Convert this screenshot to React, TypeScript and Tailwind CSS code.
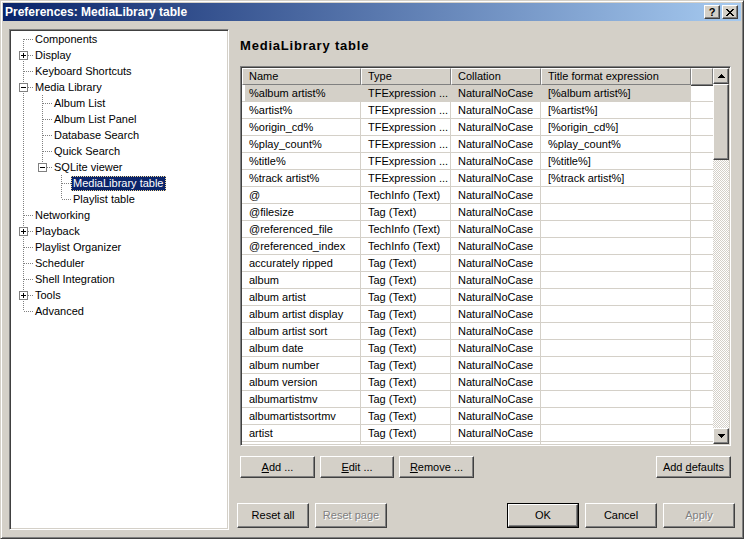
import React from "react";

const raised =
  "border border-t-white border-l-white border-r-[#404040] border-b-[#404040] shadow-[inset_-1px_-1px_#808080,inset_1px_1px_#d4d0c8] bg-[#d4d0c8]";
const sunken =
  "border border-t-[#808080] border-l-[#808080] border-r-white border-b-white shadow-[inset_1px_1px_#404040,inset_-1px_-1px_#d4d0c8]";

type TreeItem = { label: string; level: number; box?: "+" | "-"; selected?: boolean };

const tree: TreeItem[] = [
  { label: "Components", level: 0 },
  { label: "Display", level: 0, box: "+" },
  { label: "Keyboard Shortcuts", level: 0 },
  { label: "Media Library", level: 0, box: "-" },
  { label: "Album List", level: 1 },
  { label: "Album List Panel", level: 1 },
  { label: "Database Search", level: 1 },
  { label: "Quick Search", level: 1 },
  { label: "SQLite viewer", level: 1, box: "-" },
  { label: "MediaLibrary table", level: 2, selected: true },
  { label: "Playlist table", level: 2 },
  { label: "Networking", level: 0 },
  { label: "Playback", level: 0, box: "+" },
  { label: "Playlist Organizer", level: 0 },
  { label: "Scheduler", level: 0 },
  { label: "Shell Integration", level: 0 },
  { label: "Tools", level: 0, box: "+" },
  { label: "Advanced", level: 0 },
];

function hasNextSibling(i: number) {
  const lv = tree[i].level;
  for (let k = i + 1; k < tree.length; k++) {
    if (tree[k].level < lv) return false;
    if (tree[k].level === lv) return true;
  }
  return false;
}

function ancestorContinues(i: number, j: number) {
  for (let k = i - 1; k >= 0; k--) {
    if (tree[k].level === j) return hasNextSibling(k);
  }
  return false;
}

function Gutter({ top, bottom, own, box }: { top: boolean; bottom: boolean; own: boolean; box?: "+" | "-" }) {
  return (
    <svg width="19" height="16" className="shrink-0" shapeRendering="crispEdges">
      {top && <line x1="9.5" y1="0" x2="9.5" y2="8" stroke="#808080" strokeDasharray="1 1" />}
      {bottom && <line x1="9.5" y1="8" x2="9.5" y2="16" stroke="#808080" strokeDasharray="1 1" />}
      {own && <line x1="10" y1="8.5" x2="19" y2="8.5" stroke="#808080" strokeDasharray="1 1" />}
      {box && (
        <g>
          <rect x="5.5" y="4.5" width="8" height="8" fill="#fff" stroke="#808080" />
          <line x1="7" y1="8.5" x2="12" y2="8.5" stroke="#000" />
          {box === "+" && <line x1="9.5" y1="6" x2="9.5" y2="11" stroke="#000" />}
        </g>
      )}
    </svg>
  );
}

function TreeRow({ item, i }: { item: TreeItem; i: number }) {
  const cells = [];
  for (let j = 0; j < item.level; j++) {
    const c = ancestorContinues(i, j);
    cells.push(<Gutter key={j} top={c} bottom={c} own={false} />);
  }
  cells.push(
    <Gutter key="own" top={i !== 0} bottom={hasNextSibling(i)} own={true} box={item.box} />
  );
  return (
    <div className="flex h-[16px] items-center">
      {cells}
      <span
        className={
          item.selected
            ? "h-[15px] flex items-center px-[1px] border border-dotted border-[#f5db95] bg-[#0a246a] text-white whitespace-nowrap"
            : "h-[15px] flex items-center px-[1px] border border-transparent whitespace-nowrap"
        }
      >
        {item.label}
      </span>
    </div>
  );
}

const rows: string[][] = [
  ["%album artist%", "TFExpression ...", "NaturalNoCase", "[%album artist%]"],
  ["%artist%", "TFExpression ...", "NaturalNoCase", "[%artist%]"],
  ["%origin_cd%", "TFExpression ...", "NaturalNoCase", "[%origin_cd%]"],
  ["%play_count%", "TFExpression ...", "NaturalNoCase", "%play_count%"],
  ["%title%", "TFExpression ...", "NaturalNoCase", "[%title%]"],
  ["%track artist%", "TFExpression ...", "NaturalNoCase", "[%track artist%]"],
  ["@", "TechInfo (Text)", "NaturalNoCase", ""],
  ["@filesize", "Tag (Text)", "NaturalNoCase", ""],
  ["@referenced_file", "TechInfo (Text)", "NaturalNoCase", ""],
  ["@referenced_index", "TechInfo (Text)", "NaturalNoCase", ""],
  ["accurately ripped", "Tag (Text)", "NaturalNoCase", ""],
  ["album", "Tag (Text)", "NaturalNoCase", ""],
  ["album artist", "Tag (Text)", "NaturalNoCase", ""],
  ["album artist display", "Tag (Text)", "NaturalNoCase", ""],
  ["album artist sort", "Tag (Text)", "NaturalNoCase", ""],
  ["album date", "Tag (Text)", "NaturalNoCase", ""],
  ["album number", "Tag (Text)", "NaturalNoCase", ""],
  ["album version", "Tag (Text)", "NaturalNoCase", ""],
  ["albumartistmv", "Tag (Text)", "NaturalNoCase", ""],
  ["albumartistsortmv", "Tag (Text)", "NaturalNoCase", ""],
  ["artist", "Tag (Text)", "NaturalNoCase", ""],
  ["", "", "", ""],
];

const colW = ["w-[119px]", "w-[90px]", "w-[90px]", "w-[150px]"];

function HeaderCell({ label, w }: { label: string; w: string }) {
  return (
    <div
      className={`${w} h-[17px] shrink-0 flex items-center pl-[6px] border border-t-white border-l-white border-r-[#808080] border-b-[#808080] shadow-[1px_1px_0_#404040] whitespace-nowrap overflow-hidden`}
    >
      {label}
    </div>
  );
}

function Arrow({ up }: { up: boolean }) {
  return (
    <svg width="7" height="4" shapeRendering="crispEdges">
      {up ? <polygon points="3.5,0 7,4 0,4" fill="#000" /> : <polygon points="0,0 7,0 3.5,4" fill="#000" />}
    </svg>
  );
}

function Btn({
  children,
  w,
  h,
  disabled,
  def,
}: {
  children: React.ReactNode;
  w: string;
  h: string;
  disabled?: boolean;
  def?: boolean;
}) {
  const txt = disabled ? "text-[#808080] [text-shadow:1px_1px_0_#fff]" : "text-black";
  if (def) {
    return (
      <div className={`${w} ${h} border border-black flex`}>
        <div className={`${raised} flex-1 flex items-center justify-center ${txt}`}>
          <span className="whitespace-pre">{children}</span>
        </div>
      </div>
    );
  }
  return (
    <div className={`${w} ${h} ${raised} flex items-center justify-center ${txt}`}>
      <span className="whitespace-pre">{children}</span>
    </div>
  );
}

export default function App() {
  return (
    <div className="w-[744px] h-[539px] bg-[#d4d0c8] border border-t-[#d4d0c8] border-l-[#d4d0c8] border-r-[#404040] border-b-[#404040] shadow-[inset_1px_1px_#fff,inset_-1px_-1px_#808080] p-[2px] flex flex-col overflow-hidden font-['Liberation_Sans',Arial,sans-serif] text-[11px] text-black">
      {/* Title bar */}
      <div className="h-[18px] shrink-0 flex items-center bg-[linear-gradient(to_right,#0a246a,#a6caf0)] pl-[2px] pr-[3px]">
        <span className="text-white font-bold text-[12px] whitespace-nowrap">Preferences: MediaLibrary table</span>
        <div className="flex-1" />
        <div className={`w-[16px] h-[14px] ${raised} flex items-center justify-center font-bold text-[11px] leading-none`}>?</div>
        <div className={`ml-[2px] w-[16px] h-[14px] ${raised} flex items-center justify-center`}>
          <svg width="8" height="7" shapeRendering="crispEdges">
            <path d="M0 0h2v1h-2z M6 0h2v1h-2z M1 1h2v1h-2z M5 1h2v1h-2z M2 2h4v1h-4z M3 3h2v1h-2z M2 4h4v1h-4z M1 5h2v1h-2z M5 5h2v1h-2z M0 6h2v1h-2z M6 6h2v1h-2z" fill="#000" />
          </svg>
        </div>
      </div>

      {/* Body */}
      <div className="flex-1 flex">
        {/* Tree */}
        <div className={`ml-[6px] mt-[8px] w-[220px] h-[501px] shrink-0 bg-white ${sunken} pt-[1px] pl-[4px] overflow-hidden`}>
          {tree.map((it, i) => (
            <TreeRow key={i} item={it} i={i} />
          ))}
        </div>

        {/* Right area */}
        <div className="flex-1 flex flex-col">
          <div className="pl-[11px] flex flex-col">
            <div className="mt-[17px] h-[16px] flex items-center text-[13px] font-bold tracking-[0.8px]">MediaLibrary table</div>

            {/* Table */}
            <div className={`mt-[12px] w-[491px] h-[380px] ${sunken} p-[1px] flex bg-white`}>
              <div className="flex-1 flex flex-col overflow-hidden bg-white">
                <div className="flex shrink-0 bg-[#d4d0c8]">
                  <HeaderCell label="Name" w="w-[119px]" />
                  <HeaderCell label="Type" w="w-[90px]" />
                  <HeaderCell label="Collation" w="w-[90px]" />
                  <HeaderCell label="Title format expression" w="w-[150px]" />
                  <HeaderCell label="" w="flex-1" />
                </div>
                {rows.map((r, ri) => (
                  <div key={ri} className="flex h-[17px] shrink-0 border-b border-[#d4d0c8]">
                    {r.map((c, ci) => (
                      <div
                        key={ci}
                        className={`${colW[ci]} shrink-0 h-full flex items-center pl-[7px] pt-[1px] border-r border-[#d4d0c8] whitespace-nowrap overflow-hidden ${
                          ri === 0 ? "bg-[#d4d0c8]" : ""
                        } ${ri === 0 && ci === 0 ? "shadow-[inset_3px_0_#fff]" : ""}`}
                      >
                        {c}
                      </div>
                    ))}
                    <div className="flex-1" />
                  </div>
                ))}
              </div>
              {/* Scrollbar */}
              <div className="w-[16px] flex flex-col shrink-0">
                <div className={`h-[16px] ${raised} flex items-center justify-center`}>
                  <Arrow up />
                </div>
                <div className={`h-[76px] ${raised}`} />
                <div className="flex-1 bg-[conic-gradient(#d4d0c8_25%,#fff_0_50%,#d4d0c8_0_75%,#fff_0)] bg-[length:2px_2px]" />
                <div className={`h-[16px] ${raised} flex items-center justify-center`}>
                  <Arrow up={false} />
                </div>
              </div>
            </div>

            {/* Action buttons */}
            <div className="mt-[10px] w-[491px] flex items-center">
              <Btn w="w-[75px]" h="h-[22px]">
                <span className="underline">A</span>dd ...
              </Btn>
              <div className="ml-[5px]">
                <Btn w="w-[74px]" h="h-[22px]">
                  <span className="underline">E</span>dit ...
                </Btn>
              </div>
              <div className="ml-[5px]">
                <Btn w="w-[75px]" h="h-[22px]">
                  <span className="underline">R</span>emove ...
                </Btn>
              </div>
              <div className="flex-1" />
              <Btn w="w-[75px]" h="h-[22px]">
                {"Add "}
                <span className="underline">d</span>efaults
              </Btn>
            </div>
          </div>

          {/* Bottom buttons */}
          <div className="mt-[25px] pl-[8px] pr-[6px] flex items-center">
            <Btn w="w-[72px]" h="h-[25px]">Reset all</Btn>
            <div className="ml-[6px]">
              <Btn w="w-[72px]" h="h-[25px]" disabled>
                Reset page
              </Btn>
            </div>
            <div className="flex-1" />
            <Btn w="w-[72px]" h="h-[25px]" def>
              OK
            </Btn>
            <div className="ml-[6px]">
              <Btn w="w-[72px]" h="h-[25px]">Cancel</Btn>
            </div>
            <div className="ml-[6px]">
              <Btn w="w-[72px]" h="h-[25px]" disabled>
                Apply
              </Btn>
            </div>
          </div>
        </div>
      </div>
    </div>
  );
}
